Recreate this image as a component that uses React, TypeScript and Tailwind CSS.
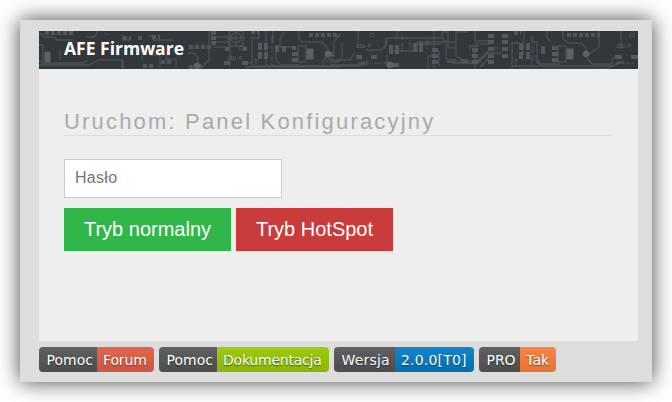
function Circuit() {
  return (
    <svg className="absolute inset-0 h-full w-full" viewBox="39 31 599 38" fill="none" stroke="#4a5054" strokeWidth="1.3">
      <path d="M39 34h3l2 3h10l3 3h6M43 44v17M39 45h4M39 61h4M97 31v3l-3 3h-8M39 65h50l6-3 4-2h23v8M41 63h42l5-3M60 50v10M61 40l12 0M123 34v6h8M148 36h5v4h20M137 47l5 5v8M150 55h10v13M166 51v8h10v9M123 60v9" />
      <path d="M209 31v29l-7 7h-7M188 53h6l4 5v10M213 37h17M213 42h15l5-3M213 47h12M230 48v18M230 31v36" />
      <path d="M252 38v28h88M244 67h96M251 38h8v-7M244 63h8M266 31v35M273 31v12M284 31l-4 8v8h12M276 47v13l5 5h18" />
      <path d="M299 31v8l3 3h20l6 7v6l-5 6v6M340 34l-6 8v14l-8 6M262 66h98l5-5M330 60h20l5-8M358 31v16M330 65h37v-5M330 62h7l5-5v-14M366 50h15l5-5v-7h56l4 4v16l8 5h18M390 51h27v-7h24M387 54v13M398 31l-2 7M413 46l5-4h38v14l9 5h6M434 31v38M442 39v-7h6v16h8V32h12M475 31v38M470 50v-4h8v-5h10M428 69v-13h5M460 60l8 3h10l10-10h6M477 62l14-14h7M480 67l14-14h7M480 44h10M439 51v15" />
      <path d="M512 69v-26h8M524 31l-1 24M547 31v7l4 4M535 55l5 9h20M563 31v8l5 4h13l5 5v9M599 31v16l-11 8M587 58l5 6h20v-5l5-3M621 31v18M512 66h101l11-5M519 69h88l4-3M533 42h4v20l4 4h73l5-5" />
      <circle cx="236" cy="38" r="5" />
      <path d="M229 31h14v15h-14zM227 38h18M236 31v14M298 46h8v16h-8zM558 46h8v16h-8z" />
      <g stroke="#505659" strokeWidth="4" strokeDasharray="4 2">
        <path d="M45 33h28M189 47h24M309 35h31M567 35h33M123 38h8M138 38h5M152 37h8M143 66h12M161 62h10M189 67h13M251 32h8M514 33h7" />
      </g>
      <g stroke="#54595d" strokeWidth="4">
        <path d="M211 33h5M211 38h5M211 43h5M225 49h4M243 49h4M292 48h4M292 54h6M292 60h6M327 54h6M356 57h6M371 57h6M488 36h6M502 36h6M488 42h6M502 42h6M488 49h6M502 49h6M488 56h6M502 56h6M488 62h6M552 48h6M552 54h6M552 60h6M615 57h7M631 57h7M389 65h10M194 66h7M224 63h6M242 63h6M432 50h6M432 56h6M432 62h6M472 50h6M472 56h6M472 62h6" />
        <path d="M260 43v7M260 52v7M266 43v7M266 52v7M391 45v9M397 45v9M415 43v9M421 43v9M521 43v7M528 43v7M521 52v7M528 52v7M277 45v7M284 46v6M543 46v8" />
      </g>
      <g stroke="#5b6164" fill="#5b6164" strokeWidth="1">
        <path d="M45 52h5v10h-5zM307 49h6v10h-6zM567 49h6v10h-6z" />
        <circle cx="328" cy="54" r="3" /><circle cx="197" cy="66" r="3" /><circle cx="586" cy="54" r="3" /><circle cx="390" cy="65" r="3" />
      </g>
      <g fill="#63696c" stroke="none" className="font-['Liberation_Mono',monospace] text-[5px]">
        <text x="105" y="35" className="text-[4px]">C2</text>
        <text x="239" y="50">C2</text>
        <text x="227" y="60">1SU-P</text>
        <text x="356" y="48">1SU-P</text>
        <text x="357" y="64" className="text-[4px]">10SU-1-2X2-5P</text>
        <text x="447" y="63">ESP-12E</text>
        <text x="369" y="37">C2</text>
        <text x="629" y="37">C2</text>
        <text x="616" y="48">1SU-P</text>
        <text x="615" y="64" className="text-[4px]">10SU-1-2</text>
        <text transform="translate(273 65) rotate(-90)" className="text-[4px]">P1SU-2X2-SMD</text>
        <text transform="translate(403 52) rotate(-90)" className="text-[4px]">P1SU-2X</text>
        <text transform="translate(533 65) rotate(-90)" className="text-[4px]">P1SU-2X2-SMD</text>
        <text transform="translate(387 49) rotate(-90)" className="text-[4px]">P1SU</text>
        <text transform="translate(411 49) rotate(-90)" className="text-[4px]">CAP1</text>
        <text transform="translate(428 49) rotate(-90)" className="text-[4px]">P1SU</text>
        <text transform="translate(257 65) rotate(-90)" className="text-[4px]">CAP</text>
        <text transform="translate(517 65) rotate(-90)" className="text-[4px]">CAP</text>
      </g>
    </svg>
  );
}

type BadgeProps = { label: string; value: string; labelClass: string; valueClass: string };

function Badge({ label, value, labelClass, valueClass }: BadgeProps) {
  return (
    <div className="flex h-[25px] overflow-hidden rounded-[4px] font-['DejaVu_Sans',sans-serif] text-[14px] leading-[26px] text-white [text-shadow:0_1px_1px_#0108]">
      <span className={`${labelClass} bg-linear-to-b from-[#606060] to-[#4d4d4d] pl-[7.6px] whitespace-nowrap`}>{label}</span>
      <span className={`${valueClass} bg-linear-to-b pl-1.5 whitespace-nowrap`}>{value}</span>
    </div>
  );
}

export default function App() {
  return (
    <div className="h-[402px] w-[672px] overflow-hidden bg-white pt-5 pl-5 font-['Liberation_Sans',Arial,sans-serif]">
      <div className="h-[362px] w-[632px] bg-[#ddd] pt-[11px] pl-[19px] shadow-[0_0_20px_#000b]">
        <main className="h-[310px] w-[599px] bg-[#eee]">
          <header className="relative h-[38px] overflow-hidden bg-[#32373b] pl-[25px]">
            <Circuit />
            <svg className="relative block h-[38px] w-[130px]">
              <text x="0" y="24" textLength="120" lengthAdjust="spacingAndGlyphs" fill="white" className="font-['Open_Sans',sans-serif] text-[18px] font-bold">AFE Firmware</text>
            </svg>
          </header>
          <section className="px-[25px] pt-[38px]">
            <h1 className="h-[29px] border-b border-[#ddd] text-[22px] leading-[29px] tracking-[2.18px] whitespace-nowrap text-[#aaa]">Uruchom: Panel Konfiguracyjny</h1>
            <input type="password" placeholder="Hasło" className="mt-[23px] block h-[39px] w-[218px] border border-[#ccc] bg-white px-2.5 pb-0.5 text-[16px] tracking-[0.3px] outline-none placeholder:text-[#757575]" />
            <div className="mt-2.5 flex gap-[5px] text-[20px] text-white">
              <button className="h-[43px] w-[167px] bg-[#31b64a] pb-0.5">Tryb normalny</button>
              <button className="h-[43px] w-[157px] bg-[#ca3c3c] pb-0.5">Tryb HotSpot</button>
            </div>
          </section>
        </main>
        <footer className="mt-1.5 flex gap-[5px]">
          <Badge label="Pomoc" value="Forum" labelClass="w-[58px] tracking-normal" valueClass="w-[57px] tracking-[-0.14px] from-[#e2664d] to-[#cb553e]" />
          <Badge label="Pomoc" value="Dokumentacja" labelClass="w-[58px] tracking-normal" valueClass="w-[112px] tracking-[-0.22px] from-[#9dcb13] to-[#88b600]" />
          <Badge label="Wersja" value="2.0.0[T0]" labelClass="w-[61px] tracking-[0.15px]" valueClass="w-[79px] tracking-[0.18px] from-[#1285ca] to-[#0070b3]" />
          <Badge label="PRO" value="Tak" labelClass="w-[41px] tracking-[-0.14px]" valueClass="w-[36px] tracking-[0.15px] from-[#fb8447] to-[#e57333]" />
        </footer>
      </div>
    </div>
  );
}
